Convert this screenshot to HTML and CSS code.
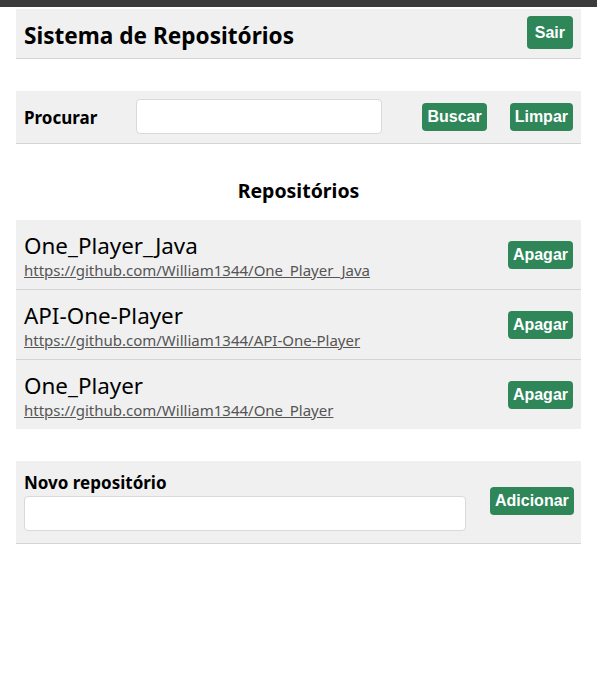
FILE: index.html
```html
<!DOCTYPE html>
<html lang="pt-BR">
<head>
<meta charset="utf-8">
<title>Sistema de Repositórios</title>
<link rel="stylesheet" href="styles.css">
</head>
<body>
<div class="topbar"></div>
<main class="container">
  <header class="header">
    <h1 class="title">Sistema de Repositórios</h1>
    <button class="btn btn-sair">Sair</button>
  </header>

  <section class="search">
    <label class="search-label" for="q">Procurar</label>
    <input id="q" class="input search-input" type="text">
    <button class="btn btn-buscar">Buscar</button>
    <button class="btn btn-limpar">Limpar</button>
  </section>

  <h2 class="list-title">Repositórios</h2>

  <ul class="repo-list">
    <li class="repo">
      <div class="repo-info">
        <div class="repo-name">One_Player_Java</div>
        <a class="repo-url" href="#">https://github.com/William1344/One_Player_Java</a>
      </div>
      <button class="btn">Apagar</button>
    </li>
    <li class="repo">
      <div class="repo-info">
        <div class="repo-name">API-One-Player</div>
        <a class="repo-url" href="#">https://github.com/William1344/API-One-Player</a>
      </div>
      <button class="btn">Apagar</button>
    </li>
    <li class="repo">
      <div class="repo-info">
        <div class="repo-name">One_Player</div>
        <a class="repo-url" href="#">https://github.com/William1344/One_Player</a>
      </div>
      <button class="btn">Apagar</button>
    </li>
  </ul>

  <section class="new-repo">
    <div class="new-field">
      <label class="new-label" for="n">Novo repositório</label>
      <input id="n" class="input new-input" type="text">
    </div>
    <button class="btn btn-add">Adicionar</button>
  </section>
</main>
</body>
</html>
```

FILE: styles.css
```css
* { box-sizing: border-box; }

html, body {
  margin: 0;
  padding: 0;
  background: #ffffff;
  font-family: "Noto Sans", "Open Sans", sans-serif;
  color: #000;
}

.topbar {
  height: 7px;
  background: #3b3b3b;
}

.container {
  padding: 2px 16px 0;
}

.header {
  display: flex;
  align-items: center;
  justify-content: space-between;
  background: #f0f0f0;
  border-bottom: 1px solid #d4d4d4;
  height: 50px;
  padding: 0 8px;
}

.title {
  margin: 3px 0 0;
  font-size: 22.6px;
  font-weight: 700;
}

.btn {
  background: #2e8659;
  color: #fff;
  border: none;
  border-radius: 4px;
  font-family: "Liberation Sans", Arial, sans-serif;
  font-weight: 700;
  font-size: 16px;
  line-height: 18px;
  height: 28px;
  padding: 0 5px;
  cursor: pointer;
}

.btn-sair {
  height: 33px;
  padding: 0 8px;
  margin-top: -2px;
}

.search {
  margin-top: 32px;
  display: flex;
  align-items: center;
  background: #f0f0f0;
  border-bottom: 1px solid #d4d4d4;
  height: 53px;
  padding: 0 8px;
}

.search-label {
  width: 112px;
  font-size: 17px;
  font-weight: 700;
}

.input {
  height: 35px;
  border: 1px solid #d9d9d9;
  border-radius: 4px;
  background: #fff;
  font-size: 16px;
  padding: 0 8px;
}

.search-input {
  width: 247px;
  margin-top: -1px;
}

.btn-buscar { margin-left: 40px; }
.btn-limpar { margin-left: 23px; }

.list-title {
  margin: 0;
  height: 76px;
  display: flex;
  align-items: center;
  justify-content: center;
  font-size: 19.5px;
  font-weight: 700;
  padding-top: 16px;
  padding-bottom: 0;
}

.repo-list {
  list-style: none;
  margin: 0;
  padding: 0;
  background: #f0f0f0;
}

.repo {
  display: flex;
  align-items: center;
  justify-content: space-between;
  height: 70px;
  padding: 0 8px;
  border-bottom: 1px solid #d4d4d4;
}

.repo:last-child {
  border-bottom: none;
  height: 69px;
}

.repo-info {
  display: flex;
  flex-direction: column;
  padding-top: 2px;
}

.repo-name {
  font-size: 22.4px;
  line-height: 29px;
}

.repo-url {
  color: #555;
  font-size: 15px;
  line-height: 20px;
}

.new-repo {
  margin-top: 32px;
  display: flex;
  align-items: center;
  background: #f0f0f0;
  border-bottom: 1px solid #d4d4d4;
  height: 83px;
  padding: 0 8px;
}

.new-field {
  display: flex;
  flex-direction: column;
  gap: 2px;
  margin-top: -2px;
}

.new-label {
  font-size: 17px;
  font-weight: 700;
  line-height: 22px;
}

.new-input {
  width: 442px;
}

.btn-add {
  margin-left: 24px;
  margin-top: -2px;
}
```
